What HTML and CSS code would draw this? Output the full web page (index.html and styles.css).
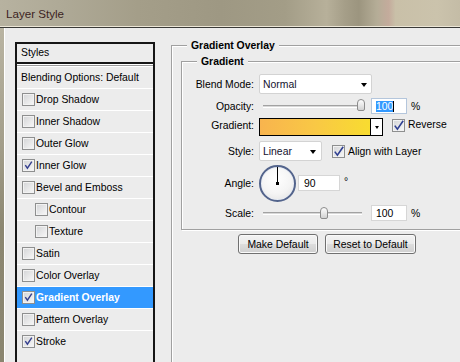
FILE: index.html
```html
<!DOCTYPE html>
<html>
<head>
<meta charset="utf-8">
<title>Layer Style</title>
<link rel="stylesheet" href="styles.css">
</head>
<body>
<div class="titlebar"><span class="title">Layer Style</span></div>
<div class="frame">
  <div class="edge"></div>
  <div class="window">
    <div class="list">
      <div class="list-head">Styles</div>
      <div class="list-sep"></div>
      <div class="row plain">Blending Options: Default</div>
      <div class="row"><span class="cb"></span>Drop Shadow</div>
      <div class="row"><span class="cb"></span>Inner Shadow</div>
      <div class="row"><span class="cb"></span>Outer Glow</div>
      <div class="row"><span class="cb"><svg viewBox="0 0 11 11" width="11" height="11"><path d="M2.3 5.2 L4.4 8.2 L8.8 1.6" fill="none" stroke="#353f8e" stroke-width="1.4"/></svg></span>Inner Glow</div>
      <div class="row"><span class="cb"></span>Bevel and Emboss</div>
      <div class="row sub"><span class="cb"></span>Contour</div>
      <div class="row sub"><span class="cb"></span>Texture</div>
      <div class="row"><span class="cb"></span>Satin</div>
      <div class="row"><span class="cb"></span>Color Overlay</div>
      <div class="row selected"><span class="cb"><svg viewBox="0 0 11 11" width="11" height="11"><path d="M2.3 5.2 L4.4 8.2 L8.8 1.6" fill="none" stroke="#353f8e" stroke-width="1.4"/></svg></span>Gradient Overlay</div>
      <div class="row"><span class="cb"></span>Pattern Overlay</div>
      <div class="row"><span class="cb"><svg viewBox="0 0 11 11" width="11" height="11"><path d="M2.3 5.2 L4.4 8.2 L8.8 1.6" fill="none" stroke="#353f8e" stroke-width="1.4"/></svg></span>Stroke</div>
    </div>
    <div class="panel">
      <fieldset class="group outer">
        <legend>Gradient Overlay</legend>
        <fieldset class="group inner">
          <legend>Gradient</legend>
          <div class="form">
            <div class="frow h20">
              <span class="lbl">Blend Mode:</span>
              <div class="select w-blend"><span>Normal</span><i class="arrow"></i></div>
            </div>
            <div class="frow h16">
              <span class="lbl">Opacity:</span>
              <div class="slider"><div class="track"></div><div class="thumb t-opacity"></div></div>
              <div class="field w-num focus"><span class="sel">100</span><span class="caret"></span></div>
              <span class="unit">%</span>
            </div>
            <div class="frow h19 top">
              <span class="lbl">Gradient:</span>
              <div class="swatch"><div class="grad"></div><div class="sw-arrow"><i class="arrow small"></i></div></div>
              <span class="cb cb-rev"><svg viewBox="0 0 11 11" width="11" height="11"><path d="M1.8 5.6 L4.4 9.2 L10.2 0.8" fill="none" stroke="#2f3f91" stroke-width="1.6"/></svg></span>
              <span class="cb-text">Reverse</span>
            </div>
            <div class="frow h20">
              <span class="lbl">Style:</span>
              <div class="select w-style"><span>Linear</span><i class="arrow"></i></div>
              <span class="cb cb-align"><svg viewBox="0 0 11 11" width="11" height="11"><path d="M1.8 5.6 L4.4 9.2 L10.2 0.8" fill="none" stroke="#2f3f91" stroke-width="1.6"/></svg></span>
              <span class="cb-text">Align with Layer</span>
            </div>
            <div class="frow h36">
              <span class="lbl">Angle:</span>
              <div class="dial"><div class="needle"></div><div class="hub"></div></div>
              <div class="field w-angle">90</div>
              <span class="unit deg">°</span>
            </div>
            <div class="frow h16">
              <span class="lbl">Scale:</span>
              <div class="slider"><div class="track"></div><div class="thumb t-scale"></div></div>
              <div class="field w-num">100</div>
              <span class="unit">%</span>
            </div>
          </div>
        </fieldset>
        <div class="buttons">
          <button class="btn b-make">Make Default</button>
          <button class="btn b-reset">Reset to Default</button>
        </div>
      </fieldset>
    </div>
  </div>
</div>
</body>
</html>
```
FILE: styles.css
```css
html, body {
  margin: 0;
  padding: 0;
  width: 460px;
  height: 362px;
  overflow: hidden;
}
body {
  font-family: "Liberation Sans", Arial, sans-serif;
  font-size: 10.4px;
  color: #000;
  background: #ececec;
}
.titlebar {
  height: 26px;
  border-bottom: 1px solid #ece6d6;
  background: linear-gradient(90deg, #b7b2a0 0%, #aea996 14%, #a49e89 30%, #9e9883 48%, #a39d87 62%, #b7b09a 71%, #a59e88 75%, #9c957f 78%, #b5ad97 82%, #c4ab9c 84.5%, #c9c0a8 86%, #cbc3ac 95%, #c4bca6 100%);
  display: flex;
  align-items: center;
}
.title {
  margin-left: 6px;
  font-size: 11.6px;
  color: #3c1f1f;
  padding-top: 1px;
}
.frame {
  display: flex;
  height: 334px;
  border-top: 1px solid #3a3a38;
}
.edge {
  width: 4px;
  flex: none;
  background: linear-gradient(180deg, #b9b4a2 0%, #a39e8a 35%, #8c8771 60%, #8a856f 100%);
}
.window {
  flex: 1;
  display: flex;
  border-left: 1px solid #ffffff;
  padding-left: 10px;
  background: #ececec;
  overflow: hidden;
}
.list {
  flex: none;
  width: 140px;
  height: 330px;
  margin-top: 14px;
  box-sizing: border-box;
  border: 2px solid #161616;
  border-bottom: none;
  background: #ececec;
}
.list-head {
  height: 18px;
  line-height: 18px;
  padding-left: 4px;
  border-bottom: 2px solid #161616;
}
.list-sep {
  height: 1px;
  background: #ffffff;
  border-bottom: 1px solid #9a9a9a;
}
.row {
  height: 22px;
  box-sizing: border-box;
  border-top: 1px solid #ffffff;
  display: flex;
  align-items: center;
  padding-left: 5px;
  white-space: nowrap;
}
.row.plain { padding-left: 4px; }
.row.sub { padding-left: 18px; }
.row.selected {
  background: #3399ff;
  color: #ffffff;
  font-weight: bold;
}
.cb {
  flex: none;
  width: 13px;
  height: 13px;
  box-sizing: border-box;
  border: 1px solid #8e8f8f;
  background: linear-gradient(135deg, #d3d4d6 0%, #f8f8f8 100%);
  box-shadow: inset 0 0 0 1px #f2f2f2;
  margin-right: 1px;
  display: flex;
  overflow: visible;
}
.cb svg { display: block; overflow: visible; }
.panel {
  flex: none;
  width: 330px;
  margin-left: 16px;
}
.group {
  margin: 0;
  border: 1px solid #a0a0a0;
  box-shadow: inset 1px 1px 0 #ffffff, 1px 1px 0 #ffffff;
  min-width: 0;
}
.group > legend {
  font-weight: bold;
  line-height: 13px;
  padding: 0 4px;
  background: #ececec;
}
.outer {
  margin-top: 11px;
  width: 330px;
  height: 400px;
  box-sizing: border-box;
  padding: 3px 0 0 9px;
}
.outer > legend { margin-left: 6px; }
.inner {
  width: 310px;
  box-sizing: border-box;
  padding: 6px 0 8px 0;
}
.inner > legend { margin-left: 15px; }
.form {
  display: flex;
  flex-direction: column;
  gap: 4px;
}
.frow {
  display: flex;
  align-items: center;
  white-space: nowrap;
}
.frow.top { align-items: flex-start; }
.h16 { height: 16px; }
.h19 { height: 19px; }
.h20 { height: 20px; }
.h36 { height: 36px; }
.lbl {
  flex: none;
  width: 72px;
  margin-right: 5px;
  text-align: right;
}
.frow.top .lbl { margin-top: 2px; }
.select {
  flex: none;
  height: 20px;
  box-sizing: border-box;
  border: 1px solid #d3d3d3;
  border-radius: 2px;
  background: #ffffff;
  display: flex;
  align-items: center;
  padding-left: 3px;
  color: #12122e;
}
.w-blend { width: 113px; }
.w-style { width: 63px; }
.arrow {
  display: block;
  width: 0;
  height: 0;
  border-left: 3.5px solid transparent;
  border-right: 3.5px solid transparent;
  border-top: 4px solid #000;
  margin-left: auto;
  margin-right: 4px;
  margin-top: 1px;
}
.w-style .arrow { margin-right: 5px; }
.arrow.small {
  border-left-width: 2.5px;
  border-right-width: 2.5px;
  border-top-width: 3px;
  margin: 0;
}
.slider {
  flex: none;
  position: relative;
  width: 108px;
  height: 16px;
}
.track {
  position: absolute;
  left: 4px;
  right: 5px;
  top: 7px;
  height: 1px;
  border-top: 1px solid #a2a2a2;
  border-bottom: 1px solid #ffffff;
  background: #d8d8d8;
}
.thumb {
  position: absolute;
  top: 1px;
  width: 8px;
  height: 12px;
  box-sizing: border-box;
  border: 1px solid #8c8c8c;
  border-radius: 4px 4px 2px 2px;
  background: linear-gradient(180deg, #fdfdfd 0%, #e4e4e4 60%, #d2d2d2 100%);
}
.t-opacity { left: 98px; }
.t-scale { left: 61px; top: 2px; }
.field {
  flex: none;
  height: 16px;
  box-sizing: border-box;
  border: 1px solid #d6d6d6;
  background: #ffffff;
  display: flex;
  align-items: center;
  padding-left: 4px;
}
.w-num { width: 36px; margin-left: 4px; }
.w-num.focus { border-color: #b4c6dc; }
.sel {
  background: #3399ff;
  color: #ffffff;
  line-height: 11px;
  padding-right: 0;
}
.caret {
  width: 1px;
  height: 11px;
  background: #000;
}
.unit { margin-left: 4px; }
.swatch {
  flex: none;
  width: 124px;
  height: 18px;
  box-sizing: border-box;
  border: 1px solid #000;
  display: flex;
}
.grad {
  width: 111px;
  box-sizing: border-box;
  border-right: 1px solid #000;
  background: linear-gradient(90deg, #f8b44e 0%, #f9c845 50%, #f8dc30 100%);
}
.sw-arrow {
  flex: 1;
  background: #ffffff;
  display: flex;
  align-items: center;
  justify-content: center;
}
.cb-rev { margin-left: 9px; margin-top: 1px; }
.frow.top .cb-text { margin-top: 1px; }
.cb-align { margin-left: 10px; }
.cb-text { margin-left: 2px; }
.dial {
  flex: none;
  position: relative;
  width: 37px;
  height: 37px;
  box-sizing: border-box;
  border-radius: 50%;
  border: 2px solid #53648c;
  background: radial-gradient(circle at 45% 35%, #ffffff 0%, #f4f4f4 55%, #dedede 100%);
  box-shadow: inset 0 0 0 1px #e8ecf4;
}
.needle {
  position: absolute;
  left: 16px;
  top: 0;
  width: 1px;
  height: 17px;
  background: #000;
}
.hub {
  position: absolute;
  left: 15px;
  top: 15px;
  width: 3px;
  height: 3px;
  background: #000;
}
.w-angle { width: 42px; margin-left: 2px; padding-left: 5px; }
.deg { margin-left: 4px; margin-top: -4px; }
.buttons {
  display: flex;
  gap: 7px;
  margin-top: 4px;
  padding-left: 57px;
}
.btn {
  height: 20px;
  box-sizing: border-box;
  border: 1px solid #707070;
  border-radius: 3px;
  background: linear-gradient(180deg, #f3f3f3 0%, #ebebeb 48%, #dddddd 52%, #cfcfcf 100%);
  box-shadow: inset 0 0 0 1px #fafafa;
  font-family: "Liberation Sans", Arial, sans-serif;
  font-size: 10.4px;
  color: #000;
  padding: 0;
}
.b-make { width: 80px; }
.b-reset { width: 91px; }
```
